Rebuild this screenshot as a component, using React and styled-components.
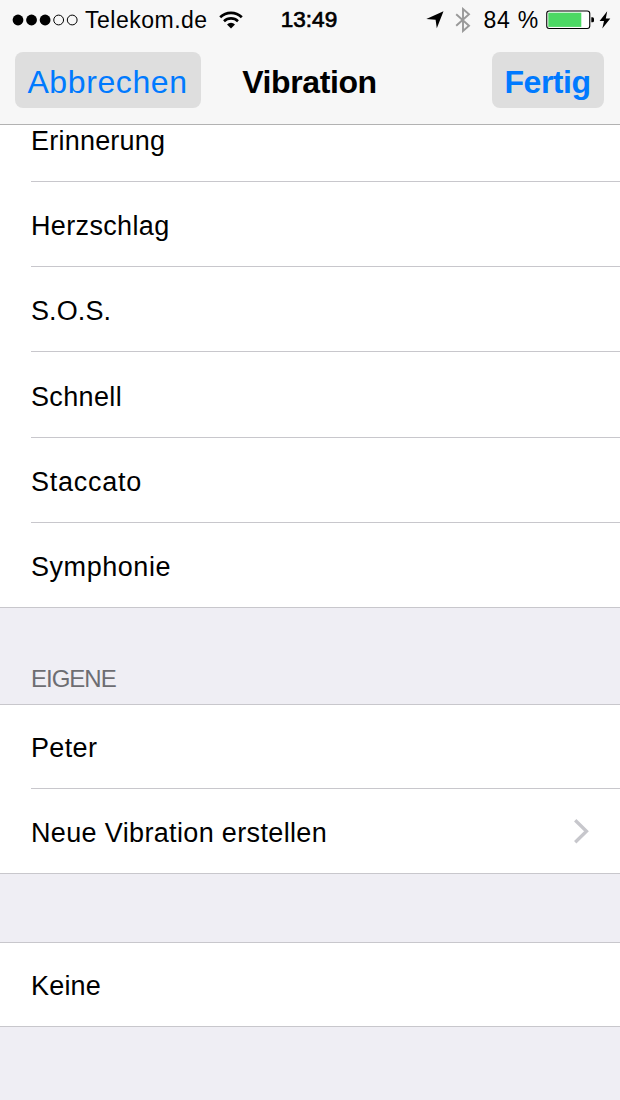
import React from 'react'
import styled, { createGlobalStyle } from 'styled-components'

const GlobalStyle = createGlobalStyle`
  * {
    box-sizing: border-box;
  }
  body {
    margin: 0;
    background: #efeef4;
    font-family: 'Liberation Sans', Arial, sans-serif;
    color: #000;
  }
`

const Screen = styled.div`
  display: flex;
  flex-direction: column;
  width: 620px;
  height: 1100px;
  overflow: hidden;
  background: #efeef4;
`

const Header = styled.header`
  flex: none;
  height: 125px;
  background: #f7f7f7;
  border-bottom: 1px solid #b2b2b2;
`

const StatusBar = styled.div`
  display: grid;
  grid-template-columns: 1fr auto 1fr;
  align-items: center;
  height: 40px;
  padding: 0 9px 0 12px;
`

const StatusLeft = styled.div`
  display: flex;
  align-items: center;
`

const StatusRight = styled.div`
  display: flex;
  align-items: center;
  justify-content: flex-end;
`

const Signal = styled.svg`
  display: block;
  margin-right: 7px;
`

const WifiSvg = styled.svg`
  display: block;
  margin-left: 11px;
`

const StatusText = styled.span`
  font-size: 23px;
  line-height: 26px;
  letter-spacing: ${(props) => props.$spacing || 0}px;
  white-space: nowrap;
`

const Clock = styled.span`
  margin-right: 5px;
  font-size: 22.5px;
  line-height: 26px;
  -webkit-text-stroke: 0.7px #000;
`

const StatusIcon = styled.svg`
  display: block;
  margin-right: ${(props) => props.$gap || 0}px;
`

const NavBar = styled.div`
  display: grid;
  grid-template-columns: 1fr auto 1fr;
  align-items: center;
  height: 80px;
  padding: 0 16px 0 15px;
`

const NavButton = styled.button`
  justify-self: ${(props) => (props.$primary ? 'end' : 'start')};
  width: ${(props) => (props.$primary ? 112 : 186)}px;
  height: 56px;
  padding: 4px 1px 0 0;
  border: 0;
  border-radius: 8px;
  background: #dedede;
  color: #007aff;
  font-family: inherit;
  font-size: 32px;
  font-weight: ${(props) => (props.$primary ? 700 : 400)};
  letter-spacing: ${(props) => (props.$primary ? -0.5 : 0.6)}px;
  text-align: center;
`

const Title = styled.h1`
  margin: 0;
  padding-top: 4px;
  font-size: 32px;
  line-height: 36px;
  font-weight: 700;
  letter-spacing: -0.4px;
`

const Content = styled.main`
  flex: 1;
  min-height: 0;
  overflow: hidden;
`

// the first list is scrolled partly under the header
const List = styled.ul`
  margin: ${(props) => (props.$scrolled ? '-28.2px' : '0')} 0 0;
  padding: 0;
  list-style: none;
  background: #fff;
  border-top: ${(props) => (props.$scrolled ? '0' : '1px solid #c8c7cc')};
  border-bottom: 1px solid #c8c7cc;
`

const Row = styled.li`
  display: flex;
  align-items: center;
  justify-content: space-between;
  height: ${(props) => props.$height || 85.2}px;
  margin-left: 31px;
  padding: ${(props) => (props.$compact ? 2.6 : 4.2)}px 30px 0 0;
  border-bottom: 1px solid #c8c7cc;

  &:last-child {
    height: ${(props) => (props.$height || 85.2) - 1}px;
    border-bottom: 0;
  }
`

const Label = styled.span`
  font-size: 27px;
  line-height: 32px;
  letter-spacing: ${(props) => props.$spacing}px;
  white-space: nowrap;
`

const SectionTitle = styled.h2`
  display: flex;
  align-items: flex-end;
  height: 96px;
  margin: 0;
  padding: 0 31px 11px;
  color: #6d6d72;
  font-size: 24px;
  line-height: 28px;
  font-weight: 400;
  letter-spacing: -1px;
`

const Spacer = styled.div`
  height: 68px;
`

const patterns = [
  { name: 'Erinnerung', spacing: 0.22 },
  { name: 'Herzschlag', spacing: 0.35 },
  { name: 'S.O.S.', spacing: 0.1 },
  { name: 'Schnell', spacing: 0.35 },
  { name: 'Staccato', spacing: 0.75 },
  { name: 'Symphonie', spacing: 0.55 },
]

const SignalDots = () => (
  <Signal width="66" height="12" viewBox="0 0 66 12">
    {[0, 1, 2, 3, 4].map((i) => (
      <circle
        key={i}
        cx={6 + i * 13.55}
        cy="6"
        r={i < 3 ? 5.4 : 4.9}
        fill={i < 3 ? '#000' : 'none'}
        stroke={i < 3 ? 'none' : '#000'}
      />
    ))}
  </Signal>
)

const Wifi = () => (
  <WifiSvg width="24" height="18" viewBox="0 0 24 18" fill="none" stroke="#000">
    <path d="M1.2 6.2a15.6 15.6 0 0 1 21.6 0" strokeWidth="2.7" />
    <path d="M5 10.2a10.2 10.2 0 0 1 14 0" strokeWidth="2.6" />
    <path d="M8 13.4a5.8 5.8 0 0 1 8 0L12 17.4z" fill="#000" stroke="none" />
  </WifiSvg>
)

const LocationArrow = () => (
  <StatusIcon $gap={11} width="18" height="18" viewBox="0 0 18 18">
    <path d="M17.5 0.3L10.8 17.3L9.6 8.7L0.3 8.1z" />
  </StatusIcon>
)

const Bluetooth = () => (
  <StatusIcon $gap={12} width="16" height="26" viewBox="0 0 16 26">
    <path
      d="M1.2 7.2L14 18.8L8 24V2L14 7.2L1.2 18.8"
      fill="none"
      stroke="#999"
      strokeWidth="1.9"
    />
  </StatusIcon>
)

const Battery = () => (
  <StatusIcon $gap={4} width="49" height="20" viewBox="0 0 49 20">
    <rect x="0.75" y="1" width="43" height="17.5" rx="2.5" fill="#fff" stroke="#000" strokeWidth="1.1" />
    <rect x="2.3" y="2.7" width="33" height="14.2" fill="#4cd964" />
    <path d="M45.3 7.3h1.2q1.5 0 1.5 1.5v2q0 1.5-1.5 1.5h-1.2z" />
  </StatusIcon>
)

const Bolt = () => (
  <StatusIcon width="12" height="18" viewBox="0 0 12 18">
    <path d="M8.2 0.3L0.6 9.9H5L3.3 17.5L11.3 7.5H6.8z" />
  </StatusIcon>
)

const Chevron = () => (
  <svg width="17" height="30" viewBox="0 0 17 30">
    <path d="M2.2 2.2L13.5 13.2L2.2 24.2" fill="none" stroke="#c7c7cc" strokeWidth="3.3" />
  </svg>
)

const App = () => {
  return (
    <>
      <GlobalStyle />
      <Screen>
        <Header>
          <StatusBar>
            <StatusLeft>
              <SignalDots />
              <StatusText $spacing={0.5}>Telekom.de</StatusText>
              <Wifi />
            </StatusLeft>
            <Clock>13:49</Clock>
            <StatusRight>
              <LocationArrow />
              <Bluetooth />
              <StatusText $spacing={0.8}>84 %</StatusText>
              <StatusIcon width="7" height="1" />
              <Battery />
              <Bolt />
            </StatusRight>
          </StatusBar>
          <NavBar>
            <NavButton>Abbrechen</NavButton>
            <Title>Vibration</Title>
            <NavButton $primary>Fertig</NavButton>
          </NavBar>
        </Header>
        <Content>
          <List $scrolled>
            {patterns.map((p) => (
              <Row key={p.name}>
                <Label $spacing={p.spacing}>{p.name}</Label>
              </Row>
            ))}
          </List>
          <SectionTitle>EIGENE</SectionTitle>
          <List>
            <Row $height={84} $compact>
              <Label $spacing={0.35}>Peter</Label>
            </Row>
            <Row $height={85}>
              <Label $spacing={0.35}>Neue Vibration erstellen</Label>
              <Chevron />
            </Row>
          </List>
          <Spacer />
          <List>
            <Row $height={84} $compact>
              <Label $spacing={0.2}>Keine</Label>
            </Row>
          </List>
        </Content>
      </Screen>
    </>
  )
}

export default App
